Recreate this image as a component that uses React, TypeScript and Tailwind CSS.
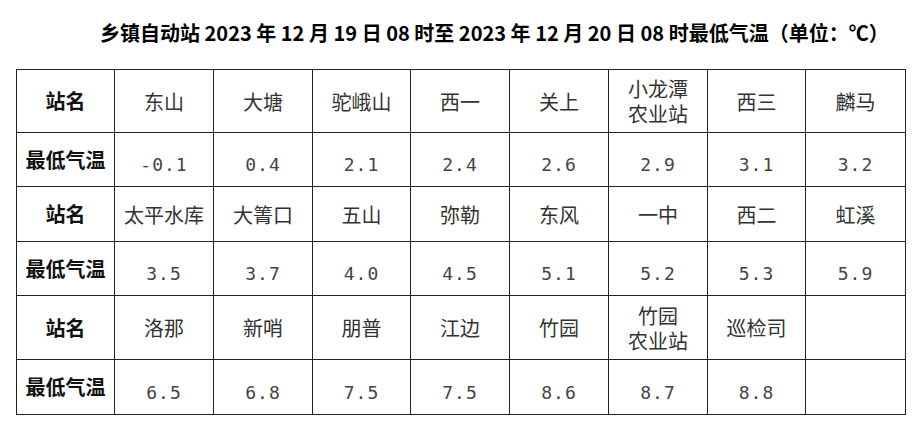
import React from "react";

const cjk = "font-['Noto_Sans_CJK_SC',sans-serif]";
const mono = "font-['DejaVu_Sans_Mono','Noto_Sans_CJK_SC',monospace]";

type Block = { names: string[]; temps: string[]; nameH: string; tempH: string };

const blocks: Block[] = [
  {
    names: ["东山", "大塘", "驼峨山", "西一", "关上", "小龙潭\n农业站", "西三", "麟马"],
    temps: ["-0.1", "0.4", "2.1", "2.4", "2.6", "2.9", "3.1", "3.2"],
    nameH: "h-[63px]",
    tempH: "h-[54px]",
  },
  {
    names: ["太平水库", "大箐口", "五山", "弥勒", "东风", "一中", "西二", "虹溪"],
    temps: ["3.5", "3.7", "4.0", "4.5", "5.1", "5.2", "5.3", "5.9"],
    nameH: "h-[55px]",
    tempH: "h-[54px]",
  },
  {
    names: ["洛那", "新哨", "朋普", "江边", "竹园", "竹园\n农业站", "巡检司", ""],
    temps: ["6.5", "6.8", "7.5", "7.5", "8.6", "8.7", "8.8", ""],
    nameH: "h-[64px]",
    tempH: "h-[55px]",
  },
];

export default function App() {
  return (
    <div className="w-[919px] h-[431px] bg-white overflow-hidden">
      <div
        className={`${cjk} pt-[19px] pl-[100px] text-[20px] leading-[28px] font-bold text-black whitespace-nowrap`}
      >
        乡镇自动站 2023 年 12 月 19 日 08 时至 2023 年 12 月 20 日 08 时最低气温（单位：℃）
      </div>
      <div className="ml-[16px] mt-[22px] w-[889px]">
        <table className="w-[889px] table-fixed border-collapse">
          <colgroup>
            <col className="w-[98px]" />
            <col className="w-[99px]" />
            <col className="w-[99px]" />
            <col className="w-[98px]" />
            <col className="w-[99px]" />
            <col className="w-[99px]" />
            <col className="w-[99px]" />
            <col className="w-[98px]" />
            <col className="w-[100px]" />
          </colgroup>
          <tbody>
            {blocks.map((b, i) => (
              <React.Fragment key={i}>
                <tr className={b.nameH}>
                  <td className={`${cjk} border border-[#222] text-center text-[20px] font-bold text-[#111] p-0`}>
                    站名
                  </td>
                  {b.names.map((n, j) => (
                    <td
                      key={j}
                      className={`${cjk} border border-[#222] text-center text-[20px] leading-[25px] text-[#333] p-0 whitespace-pre-line`}
                    >
                      {n}
                    </td>
                  ))}
                </tr>
                <tr className={b.tempH}>
                  <td className={`${cjk} border border-[#222] text-center text-[20px] font-bold text-[#111] p-0`}>
                    最低气温
                  </td>
                  {b.temps.map((t, j) => (
                    <td
                      key={j}
                      className={`${mono} border border-[#222] text-center text-[18px] tracking-[1px] text-[#444] p-0 pt-[10px]`}
                    >
                      {t}
                    </td>
                  ))}
                </tr>
              </React.Fragment>
            ))}
          </tbody>
        </table>
      </div>
    </div>
  );
}
